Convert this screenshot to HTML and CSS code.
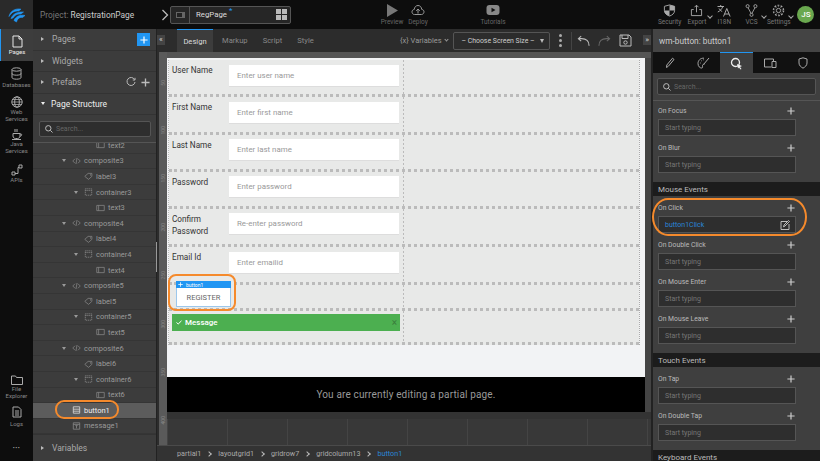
FILE: index.html
```html
<!DOCTYPE html>
<html>
<head>
  <meta charset="UTF-8">
  <title>RegistrationPage</title>
  <link rel="stylesheet" href="styles.css">
</head>
<body>
<svg class="sprite" width="0" height="0">
  <symbol id="i-plus" viewBox="0 0 10 10"><path d="M5 .5v9M.5 5h9" fill="none" stroke="currentColor" stroke-width="1.5"/></symbol>
  <symbol id="i-code" viewBox="0 0 12 10"><path d="M4 2 1 5l3 3M8 2l3 3-3 3M6.700 1 5.300 9" fill="none" stroke="currentColor"/></symbol>
  <symbol id="i-label" viewBox="0 0 12 10"><path d="M1 5.500 5.500 1.500H10.500V5.500L6 9.500Z" fill="none" stroke="currentColor"/><circle cx="8.600" cy="3.500" r=".7" fill="currentColor"/></symbol>
  <symbol id="i-box" viewBox="0 0 10 10"><path d="M1 1h8v8H1zM1 3.200h8" fill="none" stroke="currentColor" stroke-dasharray="1.600 .8"/></symbol>
  <symbol id="i-text" viewBox="0 0 12 10"><path d="M1 1.500h10v7H1zM3.500 1.500v7" fill="none" stroke="currentColor"/></symbol>
  <symbol id="i-btn" viewBox="0 0 10 10"><path d="M1 1h8v8H1zM1 4h8M1 6.500h8" fill="none" stroke="currentColor"/></symbol>
  <symbol id="i-msg" viewBox="0 0 10 10"><path d="M1 1h8v8H1zM1 3h8M5 4.500V8M3.500 4.500h3" fill="none" stroke="currentColor"/></symbol>
</svg>

<header class="topbar">
  <div class="logo">
    <svg width="18" height="16" viewBox="0 0 18 16"><path d="M1 9.500C2 4 7.500 1 13 2.200L10.600 4C6.500 3.400 3.500 5.500 1 9.500Z M3 11.500C5 6.500 10 4.500 15.500 5L12.800 7C9 6.500 6.500 8.300 5 11Z M6 13.500C7.500 9.500 12 7.500 17 8.500L14.500 10.500C11.500 10 9.500 11.500 8.500 15Z" fill="#2196f3" stroke="#2196f3" stroke-width=".6"/></svg>
  </div>
  <div class="project"><span class="project-key">Project:</span> RegistrationPage</div>
  <svg class="crumb-arrow" width="8" height="12" viewBox="0 0 8 12"><path d="M1.500 1 6.500 6l-5 5" fill="none" stroke="#bbb" stroke-width="1.300"/></svg>
  <div class="pagetab">
    <span class="pagetab-thumb"><i></i></span>
    <span class="pagetab-name">RegPage<sup>*</sup></span>
    <span class="pagetab-grid"><i></i><i></i><i></i><i></i></span>
  </div>
  <div class="actions-mid">
    <div class="action play">
      <svg width="12" height="13" viewBox="0 0 12 13"><path d="M1 0 12 6.500 1 13Z" fill="#777"/></svg>
      <span>Preview</span>
    </div>
    <div class="action deploy">
      <svg width="14" height="13" viewBox="0 0 14 13"><path d="M3.500 10.500C1.500 10.500 1 8.800 1 7.800 1 6.500 2 5.500 3.200 5.500 3.500 3 5 1.500 7 1.500S10.500 3 10.800 5.500C12 5.500 13 6.500 13 7.800 13 9 12 10.500 10.500 10.500ZM7 9.500V5M5.200 6.800 7 5l1.800 1.800" fill="none" stroke="#999"/></svg>
      <span>Deploy</span>
    </div>
    <div class="action tutorials">
      <svg width="14" height="13" viewBox="0 0 14 13"><rect x="0.500" y="1" width="13" height="10" rx="3" fill="#888"/><path d="M5.500 3.800 9.500 6l-4 2.200Z" fill="#111"/></svg>
      <span>Tutorials</span>
    </div>
  </div>
  <div class="actions-right">
    <div class="action sec">
      <svg width="13" height="13" viewBox="0 0 13 14"><path d="M6.500 1 12 2.500V7c0 3-2.500 5-5.500 6C3.500 12 1 10 1 7V2.500Z" fill="none" stroke="#aaa"/><path d="M6.500 1 12 2.500V7H6.500ZM6.500 7v6C3.500 12 1 10 1 7Z" fill="#aaa"/></svg>
      <span>Security</span>
    </div>
    <div class="action sec">
      <svg width="13" height="13" viewBox="0 0 14 14"><path d="M4 6H1.500v6.500h11V6H10M7 9V1.500M4.800 3.500 7 1.300l2.200 2.200" fill="none" stroke="#aaa"/></svg>
      <span>Export</span><b class="caret"></b>
    </div>
    <div class="action sec">
      <svg width="14" height="13" viewBox="0 0 14 13"><path d="M.500 2.500h6.500M3.700 1v1.500M5.800 2.500C5 5 3 7 .800 8M2 4.500c.8 1.500 2 2.500 3.200 3M6.500 12.500 9.800 4.500l3.300 8M7.600 10h4.400" fill="none" stroke="#aaa"/></svg>
      <span>I18N</span>
    </div>
    <div class="action sec">
      <svg width="13" height="13" viewBox="0 0 14 15"><circle cx="2.500" cy="2.500" r="1.800" fill="none" stroke="#aaa"/><circle cx="11.500" cy="2.500" r="1.800" fill="none" stroke="#aaa"/><circle cx="7" cy="12.500" r="1.800" fill="none" stroke="#aaa"/><path d="M3 4.300 6.500 10.800M11 4.300 7.500 10.800" fill="none" stroke="#aaa"/></svg>
      <span>VCS</span><b class="caret"></b>
    </div>
    <div class="action sec">
      <svg width="13" height="13" viewBox="0 0 14 14"><circle cx="7" cy="7" r="2.300" fill="none" stroke="#aaa"/><circle cx="7" cy="7" r="5" fill="none" stroke="#aaa" stroke-width="2.400" stroke-dasharray="1.800 1.340"/><circle cx="7" cy="7" r="4.600" fill="none" stroke="#0d0d0d" stroke-width=".8"/></svg>
      <span>Settings</span><b class="caret"></b>
    </div>
    <div class="avatar">JS</div>
  </div>
</header>

<div class="workspace">
  <nav class="rail">
    <div class="rail-item active">
      <svg width="11" height="13" viewBox="0 0 11 13"><path d="M1 1h6l3 3v8H1ZM7 1v3h3" fill="none" stroke="#e8e8e8"/></svg>
      <span>Pages</span>
    </div>
    <div class="rail-item db">
      <svg width="11" height="13" viewBox="0 0 11 13"><ellipse cx="5.500" cy="2.500" rx="4.500" ry="1.700" fill="none" stroke="#aaa"/><path d="M1 2.500v8c0 1 2 1.700 4.500 1.700s4.500-.7 4.500-1.700v-8M1 6.500c0 1 2 1.700 4.500 1.700S10 7.500 10 6.500" fill="none" stroke="#aaa"/></svg>
      <span>Databases</span>
    </div>
    <div class="rail-item">
      <svg width="12" height="12" viewBox="0 0 12 12"><circle cx="6" cy="6" r="5.200" fill="none" stroke="#aaa"/><ellipse cx="6" cy="6" rx="2.300" ry="5.200" fill="none" stroke="#aaa"/><path d="M.8 6h10.400M1.500 3.500h9M1.500 8.500h9" stroke="#aaa" stroke-width=".8"/></svg>
      <span>Web<br>Services</span>
    </div>
    <div class="rail-item">
      <svg width="12" height="12" viewBox="0 0 12 12"><path d="M2 5.500h7v2.500c0 1.500-1.200 2.500-2.500 2.500h-2C3.200 10.500 2 9.500 2 8ZM9 6h1c1 0 1 2-.8 2.200M1 11.500h9M4 1v3M6 1v3" fill="none" stroke="#aaa"/></svg>
      <span>Java<br>Services</span>
    </div>
    <div class="rail-item api">
      <svg width="12" height="12" viewBox="0 0 12 12"><path d="M1 8h3v3H1ZM8 1h3v3H8ZM4 9.500h3V3.500h1" fill="none" stroke="#aaa"/></svg>
      <span>APIs</span>
    </div>
    <div class="rail-item files">
      <svg width="12" height="10" viewBox="0 0 12 10"><path d="M.5 9.500V1h4l1 1.500h6v7Z" fill="none" stroke="#aaa"/></svg>
      <span>File<br>Explorer</span>
    </div>
    <div class="rail-item logs">
      <svg width="10" height="12" viewBox="0 0 10 12"><path d="M1 1h5.500L9 3.500V11H1ZM3 5h4M3 7h4M3 9h4" fill="none" stroke="#aaa"/></svg>
      <span>Logs</span>
    </div>
    <div class="rail-dots">•••</div>
  </nav>

  <aside class="leftpanel">
    <div class="sec-row"><b class="tri"></b><span>Pages</span><span class="add-btn"><svg width="8" height="8"><use href="#i-plus"/></svg></span></div>
    <div class="sec-row"><b class="tri"></b><span>Widgets</span></div>
    <div class="sec-row"><b class="tri"></b><span>Prefabs</span>
      <span class="sec-tools">
        <svg width="10" height="10" viewBox="0 0 10 10"><path d="M8.500 2.500A4 4 0 1 0 9 5M9 .8v2.200H6.800" fill="none" stroke="#bbb"/></svg>
        <svg width="9" height="9"><use href="#i-plus"/></svg>
      </span>
    </div>
    <div class="sec-row open"><b class="tri down"></b><span>Page Structure</span></div>
    <div class="search-wrap">
      <div class="searchbox">
        <svg width="8" height="8" viewBox="0 0 8 8"><circle cx="3.300" cy="3.300" r="2.700" fill="none" stroke="#bbb"/><path d="m5.300 5.300 2.200 2.200" stroke="#bbb"/></svg>
        <span>Search...</span>
      </div>
    </div>
    <div class="tree">
      <div class="tree-list">
        <div class="node lv3"><svg><use href="#i-text"/></svg>text2</div>
        <div class="node lv1"><b class="tri-s"></b><svg><use href="#i-code"/></svg>composite3</div>
        <div class="node lv2"><svg><use href="#i-label"/></svg>label3</div>
        <div class="node lv2b"><b class="tri-s"></b><svg><use href="#i-box"/></svg>container3</div>
        <div class="node lv3"><svg><use href="#i-text"/></svg>text3</div>
        <div class="node lv1"><b class="tri-s"></b><svg><use href="#i-code"/></svg>composite4</div>
        <div class="node lv2"><svg><use href="#i-label"/></svg>label4</div>
        <div class="node lv2b"><b class="tri-s"></b><svg><use href="#i-box"/></svg>container4</div>
        <div class="node lv3"><svg><use href="#i-text"/></svg>text4</div>
        <div class="node lv1"><b class="tri-s"></b><svg><use href="#i-code"/></svg>composite5</div>
        <div class="node lv2"><svg><use href="#i-label"/></svg>label5</div>
        <div class="node lv2b"><b class="tri-s"></b><svg><use href="#i-box"/></svg>container5</div>
        <div class="node lv3"><svg><use href="#i-text"/></svg>text5</div>
        <div class="node lv1"><b class="tri-s"></b><svg><use href="#i-code"/></svg>composite6</div>
        <div class="node lv2"><svg><use href="#i-label"/></svg>label6</div>
        <div class="node lv2b"><b class="tri-s"></b><svg><use href="#i-box"/></svg>container6</div>
        <div class="node lv3"><svg><use href="#i-text"/></svg>text6</div>
        <div class="node lv0 selected"><svg><use href="#i-btn"/></svg>button1</div>
        <div class="node lv0"><svg><use href="#i-msg"/></svg>message1</div>
      </div>
    </div>
    <div class="tree-scroll"></div>
    <div class="sec-row vars"><b class="tri"></b><span>Variables</span></div>
  </aside>

  <main class="center">
    <div class="toolbar">
      <span class="handle">«</span>
      <div class="tabs">
        <span class="tab active">Design</span>
        <span class="tab">Markup</span>
        <span class="tab">Script</span>
        <span class="tab">Style</span>
      </div>
      <div class="tools">
        <span class="vars-btn">{x} Variables <b class="caret"></b></span>
        <span class="screen-select">– Choose Screen Size –<b class="tri-sel"></b></span>
        <span class="kebab"><i></i><i></i><i></i></span>
        <b class="tool-sep"></b>
        <svg class="undo" width="13" height="12" viewBox="0 0 14 12"><path d="M13 11C13 6 10 3.500 5 3.500H1.500M4.500 .8 1.500 3.500l3 2.700" fill="none" stroke="#bbb" stroke-width="1.200"/></svg>
        <svg class="redo" width="13" height="12" viewBox="0 0 14 12"><path d="M1 11C1 6 4 3.500 9 3.500H12.500M9.500 .8l3 2.700-3 2.700" fill="none" stroke="#666" stroke-width="1.200"/></svg>
        <svg class="save" width="13" height="13" viewBox="0 0 13 13"><path d="M1 1h9l2 2v9H1ZM3 1v3.500h6V1" fill="none" stroke="#bbb"/><circle cx="6.500" cy="8.500" r="1.700" fill="none" stroke="#bbb"/></svg>
      </div>
      <span class="handle right">»</span>
    </div>
    <div class="canvas-area">
      <div class="ruler-left">
        <span>50</span><span>100</span><span>150</span><span>200</span><span>250</span><span>300</span><span>350</span><span>400</span>
      </div>
      <div class="canvas">
        <div class="ruler-top"></div>
        <div class="page">
          <div class="form">
            <div class="form-row r37"><label>User Name</label><div class="input up">Enter user name</div></div>
            <div class="form-row r38"><label>First Name</label><div class="input up">Enter first name</div></div>
            <div class="form-row r37"><label>Last Name</label><div class="input">Enter last name</div></div>
            <div class="form-row r37"><label>Password</label><div class="input">Enter password</div></div>
            <div class="form-row r38"><label>Confirm Password</label><div class="input">Re-enter password</div></div>
            <div class="form-row r38"><label>Email Id</label><div class="input up">Enter emailid</div></div>
            <div class="form-row r26 btn-row">
              <div class="btn-widget">
                <div class="btn-tag"><svg width="5" height="5"><use href="#i-plus"/></svg>button1</div>
                <div class="btn-body">REGISTER</div>
              </div>
            </div>
            <div class="form-row r34 msg-row">
              <div class="message">
                <svg width="6" height="5" viewBox="0 0 6 5"><path d="M.5 2.500 2.200 4 5.500 .8" fill="none" stroke="#fff"/></svg>
                <span>Message</span><span class="msg-x">×</span>
              </div>
            </div>
          </div>
        </div>
        <div class="partial-note">You are currently editing a partial page.</div>
        <div class="grid-bg"></div>
      </div>
    </div>
    <div class="breadcrumbs">
      <span>partial1</span><i></i><span>layoutgrid1</span><i></i><span>gridrow7</span><i></i><span>gridcolumn13</span><i></i><span class="cur">button1</span>
    </div>
  </main>

  <aside class="props">
    <div class="props-title">wm-button: button1</div>
    <div class="props-tabs">
      <span class="ptab"><svg width="10" height="12" viewBox="0 0 10 12"><path d="M1.500 10.500 1.800 8 7.500 1.200 9 2.500 3.300 9.300Z" fill="none" stroke="#aaa"/></svg></span>
      <span class="ptab"><svg width="13" height="12" viewBox="0 0 13 12"><path d="M7 1.200C3.500.8 1 3.500 1 6.500c0 3 2 4.500 3.500 4.500 1.500 0 1-1.500 1-2.500 0-1 1-1.300 2-1.300M12 1 6.500 7.500M3 6h.7M4 3.800h.7M6 2.800h.7" fill="none" stroke="#aaa"/></svg></span>
      <span class="ptab active"><svg width="13" height="13" viewBox="0 0 13 13"><circle cx="5.500" cy="5.500" r="4" fill="none" stroke="#eee" stroke-width="1.300"/><path d="m7 7 5 2-2 1 1.500 2-1 .5-1.500-2-1 1Z" fill="#eee"/></svg></span>
      <span class="ptab"><svg width="14" height="10" viewBox="0 0 14 10"><path d="M8.500 9H1.500V1h9v2M9 3.500h4v6H9Z" fill="none" stroke="#aaa"/></svg></span>
      <span class="ptab"><svg width="10" height="12" viewBox="0 0 10 12"><path d="M5 .8 9 2v4c0 2.500-2 4-4 5.200C3 10 1 8.500 1 6V2Z" fill="none" stroke="#aaa"/></svg></span>
    </div>
    <div class="props-search">
      <div class="searchbox">
        <svg width="8" height="8" viewBox="0 0 8 8"><circle cx="3.300" cy="3.300" r="2.700" fill="none" stroke="#bbb"/><path d="m5.300 5.300 2.200 2.200" stroke="#bbb"/></svg>
        <span>Search...</span>
      </div>
    </div>
    <div class="event-group first">
      <div class="field"><div class="field-head">On Focus<svg width="8" height="8"><use href="#i-plus"/></svg></div><div class="field-input">Start typing</div></div>
      <div class="field"><div class="field-head">On Blur<svg width="8" height="8"><use href="#i-plus"/></svg></div><div class="field-input">Start typing</div></div>
    </div>
    <div class="event-title">Mouse Events</div>
    <div class="event-group">
      <div class="field"><div class="field-head">On Click<svg width="8" height="8"><use href="#i-plus"/></svg></div>
        <div class="field-input filled">button1Click
          <svg width="10" height="10" viewBox="0 0 10 10"><path d="M7 1.500H1v8h8V4M3.500 6.800 4 5 8.500 .5l1 1L5 6Z" fill="none" stroke="#ccc" stroke-width=".9"/></svg>
        </div>
      </div>
      <div class="field"><div class="field-head">On Double Click<svg width="8" height="8"><use href="#i-plus"/></svg></div><div class="field-input">Start typing</div></div>
      <div class="field"><div class="field-head">On Mouse Enter<svg width="8" height="8"><use href="#i-plus"/></svg></div><div class="field-input">Start typing</div></div>
      <div class="field"><div class="field-head">On Mouse Leave<svg width="8" height="8"><use href="#i-plus"/></svg></div><div class="field-input">Start typing</div></div>
    </div>
    <div class="event-title">Touch Events</div>
    <div class="event-group">
      <div class="field"><div class="field-head">On Tap<svg width="8" height="8"><use href="#i-plus"/></svg></div><div class="field-input">Start typing</div></div>
      <div class="field"><div class="field-head">On Double Tap<svg width="8" height="8"><use href="#i-plus"/></svg></div><div class="field-input">Start typing</div></div>
    </div>
    <div class="event-title">Keyboard Events</div>
  </aside>
</div>

<!-- orange callouts drawn over the screenshot -->
<div class="callout c-tree"></div>
<div class="callout c-button"></div>
<div class="callout c-click"></div>
</body>
</html>
```
FILE: styles.css
```css
*{box-sizing:border-box;}
html,body{margin:0;height:100%;}
body{width:820px;height:461px;overflow:hidden;background:#0d0d0d;color:#ccc;font-family:Roboto,"Liberation Sans",sans-serif;font-size:9px;position:relative;}
.sprite{position:absolute;}

/* top bar */
.topbar{display:flex;align-items:center;height:29px;background:#0d0d0d;}
.logo{width:33px;height:29px;background:#2a2a2a;display:flex;align-items:center;justify-content:center;}
.project{width:122px;padding-left:7px;font-size:8.400px;color:#ccc;white-space:nowrap;}
.project-key{color:#777;}
.crumb-arrow{margin:0 1px 0 6px;}
.pagetab{display:flex;align-items:center;width:121px;height:18px;border:1px solid #555;border-radius:2px;background:#262626;}
.pagetab-thumb{width:19px;height:16px;border-right:1px solid #555;display:flex;align-items:center;justify-content:center;}
.pagetab-thumb i{display:block;width:9px;height:6px;border:1px solid #666;border-right-width:3px;background:#222;}
.pagetab-name{flex:1;padding-left:6px;color:#ddd;font-size:7.800px;}
.pagetab-name sup{color:#2196f3;font-size:8px;line-height:0;margin-left:2px;}
.pagetab-grid{display:grid;grid-template-columns:5px 5px;gap:1px;margin-right:3px;}
.pagetab-grid i{display:block;height:5px;background:#bbb;}
.actions-mid{width:365px;height:29px;display:flex;flex:none;}
.action{display:flex;flex-direction:column;align-items:center;padding-top:4px;color:#666;font-size:6.500px;height:29px;position:relative;}
.action span{margin-top:1px;line-height:9px;white-space:nowrap;}
.action.play{margin-left:89px;width:24px;}
.action.deploy{margin-left:2px;width:24px;}
.action.tutorials{margin-left:48px;width:30px;}
.actions-right{display:flex;align-items:flex-start;height:29px;}
.action.sec{width:27.300px;color:#777;}
.caret{display:inline-block;width:4px;height:4px;border-right:1px solid #aaa;border-bottom:1px solid #aaa;transform:rotate(45deg);}
.action .caret{position:absolute;right:-1px;top:14px;}
.avatar{width:17px;height:17px;margin:6px 0 0 5px;border-radius:50%;background:#6aa84f;color:#fff;font-size:8px;font-weight:500;display:flex;align-items:center;justify-content:center;}

/* main columns */
.workspace{display:flex;height:432px;}
.rail{width:33px;flex:none;display:flex;flex-direction:column;background:#0d0d0d;}
.rail-item{display:flex;flex-direction:column;align-items:center;flex:none;padding:6px 0 0;color:#888;font-size:6px;line-height:7px;text-align:center;}
.rail-item.active{height:32px;background:#3d3d3d;border-left:1px solid #2196f3;color:#eee;}
.rail-item.db{padding-bottom:2px;}
.rail-item.db span{margin-top:1px;}
.rail-item.api{padding-top:10px;}
.rail-item.files{margin-top:auto;padding-bottom:1px;}
.rail-item.logs{padding-bottom:8px;}
.rail-item.logs span{margin-top:2px;}
.rail-dots{height:26px;text-align:center;color:#aaa;font-size:6px;letter-spacing:.5px;line-height:26px;}

/* left panel */
.leftpanel{width:124px;flex:none;display:flex;flex-direction:column;background:#3c3c3c;border-right:1px solid #222;position:relative;}
.sec-row{display:flex;align-items:center;height:21.500px;flex:none;padding-left:8px;font-size:8.500px;color:#aaa;border-bottom:1px solid #333;position:relative;}
.sec-row.open{color:#eee;}
.tri{width:0;height:0;margin-right:8px;border-left:3px solid #bbb;border-top:2.500px solid transparent;border-bottom:2.500px solid transparent;}
.tri.down{border-top:3px solid #eee;border-bottom:0;border-left:2.500px solid transparent;border-right:2.500px solid transparent;margin-right:6px;}
.add-btn{position:absolute;right:6px;top:4px;width:13px;height:13px;background:#2196f3;color:#fff;display:flex;align-items:center;justify-content:center;}
.sec-tools{margin-left:auto;margin-right:6px;display:flex;gap:5px;align-items:center;color:#bbb;}
.search-wrap{height:28px;flex:none;padding:6px 5px 5px 6px;border-bottom:1px solid #555;}
.searchbox{display:flex;align-items:center;height:100%;padding-left:5px;gap:3px;background:#2e2e2e;border:1px solid #555;border-radius:2px;color:#666;font-size:7px;}
.tree{flex:1;overflow:hidden;min-height:0;}
.tree-list{margin-top:-5px;}
.node{display:flex;align-items:center;height:15.600px;color:#999;font-size:7.500px;border-bottom:1px solid #353535;white-space:nowrap;}
.node svg{width:9px;height:8px;margin-right:3px;color:#888;flex:none;}
.lv0{padding-left:39px;}
.lv1{padding-left:29px;}
.lv2{padding-left:51px;}
.lv2b{padding-left:41px;}
.lv3{padding-left:63px;}
.tri-s{width:0;height:0;margin-right:6px;border-top:3px solid #999;border-left:2.500px solid transparent;border-right:2.500px solid transparent;}
.node.selected{background:#5c5c5c;color:#eee;}
.node.selected svg{color:#ddd;}
.tree-scroll{position:absolute;right:-1px;top:213px;width:1.500px;height:30px;background:#999;}
.sec-row.vars{height:27px;border-bottom:0;border-top:1px solid #333;}

/* center */
.center{width:494px;flex:none;display:flex;flex-direction:column;background:#2c2c2c;}
.toolbar{display:flex;align-items:stretch;height:23px;flex:none;background:#2c2c2c;position:relative;}
.handle{position:absolute;left:0;top:6px;width:8px;height:10px;background:#444;color:#ccc;font-size:8px;line-height:9px;text-align:center;}
.handle.right{left:auto;right:0;}
.tabs{display:flex;margin-left:20px;height:23px;}
.tab{padding:0 7.500px;display:flex;align-items:center;font-size:7.600px;color:#888;}
.tab.active{background:#3c3c3c;border-top:1px solid #2196f3;color:#ddd;width:36px;padding:0;justify-content:center;margin-right:1.500px;}
.tools{display:flex;align-items:center;margin-left:auto;}
.vars-btn{font-size:7.500px;color:#999;margin-right:5px;white-space:nowrap;}
.vars-btn .caret{width:3px;height:3px;margin:0 0 2px 1px;border-color:#999;}
.screen-select{display:flex;align-items:center;justify-content:space-between;width:97px;height:18px;padding:0 5px 0 8px;font-size:6.900px;color:#ccc;border:1px solid #555;border-radius:2px;white-space:nowrap;}
.tri-sel{width:0;height:0;border-top:4px solid #bbb;border-left:2px solid transparent;border-right:2px solid transparent;}
.kebab{display:flex;flex-direction:column;gap:1.500px;margin:0 9px 0 9px;}
.kebab i{display:block;width:3.500px;height:3.500px;border-radius:50%;background:#aaa;}
.tool-sep{width:1px;height:18px;background:#444;}
.undo{margin-left:5px;}
.redo{margin-left:8px;}
.save{margin:0 19px 0 8px;}
.canvas-area{flex:1;display:flex;min-height:0;padding-left:2px;}
.ruler-left{width:8px;flex:none;background:#5a5a5a;display:flex;flex-direction:column;justify-content:space-around;align-items:center;color:#888;font-size:5px;overflow:hidden;padding-top:8px;}
.ruler-left span{writing-mode:vertical-rl;transform:rotate(180deg);}
.canvas{flex:1;display:flex;flex-direction:column;background:#444;}
.ruler-top{height:6px;flex:none;background:#555;}
.page{height:319px;width:478px;flex:none;background:#f2f3f5;padding:2px 5px 0 1px;}
.form{border-left:1px dotted #bbb;border-right:1px dotted #aaa;}
.form-row{display:flex;align-items:flex-start;background:repeating-linear-gradient(to bottom,#bbb 0 2px,transparent 2px 4px) 234px 0/1px 100% no-repeat,#e8e9e8;border-bottom:3px dotted #bbb;padding-left:3px;padding-top:3px;}
.r37{height:37px;}
.r38{height:38px;}
.r26{height:26px;}
.r34{height:34px;}
.form-row label{width:57px;font-size:8.200px;color:#333;line-height:12px;padding-top:1px;}
.input{width:170px;height:22px;margin-top:1px;background:#fff;border-bottom:1px solid #ddd;padding-left:8px;color:#999;font-size:7.900px;line-height:22px;}
.input.up{margin-top:2px;}
.btn-row{padding-top:0;position:relative;}
.btn-widget{position:absolute;left:7px;top:-4px;width:55px;}
.btn-tag{display:flex;align-items:center;gap:3px;height:7px;padding-left:2px;background:#2196f3;color:#fff;font-size:5px;}
.btn-body{height:19px;background:#fff;border:1px solid #9cc7ec;border-top:0;color:#666;font-size:7.500px;text-align:center;line-height:19px;}
.msg-row{padding-top:3px;}
.message{display:flex;align-items:center;width:228px;height:17px;padding:0 3px 0 4px;gap:3px;background:#4caf50;color:#fff;font-size:8px;font-weight:500;}
.msg-x{margin-left:auto;color:#3a7d3d;font-size:10px;font-weight:400;}
.partial-note{height:35px;width:478px;flex:none;display:flex;align-items:center;justify-content:center;background:#000;color:#999;font-size:10px;letter-spacing:.15px;}
.grid-bg{flex:1;background-color:#383838;background-image:linear-gradient(to right,#444 1px,transparent 1px);background-size:60px 100%;border-top:7px solid #333;}
.breadcrumbs{display:flex;align-items:center;height:16px;flex:none;padding-left:20px;background:#333;border-top:1px solid #4a4a4a;color:#aaa;font-size:7.200px;}
.breadcrumbs i{display:inline-block;width:4px;height:4px;margin:0 7px 0 6px;border-top:1px solid #bbb;border-right:1px solid #bbb;transform:rotate(45deg);}
.breadcrumbs .cur{color:#2a86d8;}

/* properties panel */
.props{width:169px;flex:none;background:#3f3f3f;border-left:2px solid #222;overflow:hidden;}
.props-title{height:23px;display:flex;align-items:center;padding-left:6px;background:#444;color:#ccc;font-size:8.300px;}
.props-tabs{display:flex;height:21px;background:#111;}
.ptab{flex:1;display:flex;align-items:center;justify-content:center;}
.ptab.active{background:#3f3f3f;border-top:1px solid #2196f3;}
.props-search{height:28px;padding:5px 4px 5px 4px;border-bottom:1px solid #555;}
.event-group{padding:4px 0 5px 5px;}
.event-group.first{padding-top:2px;}
.field{height:37px;padding-top:2px;}
.field-head{display:flex;align-items:center;justify-content:space-between;width:138px;height:12px;color:#bbb;font-size:6.800px;}
.field-head svg{color:#ccc;margin-right:1px;}
.field-input{display:flex;align-items:center;justify-content:space-between;width:138px;height:17px;margin-top:2px;padding:0 5px 0 6px;background:#2e2e2e;border:1px solid #555;color:#777;font-size:7px;}
.field-input.filled{color:#2a86d8;}
.event-title{display:flex;align-items:center;height:14px;padding-left:5px;background:#1c1c1c;color:#bbb;font-size:8px;}

/* callouts */
.callout{position:absolute;border:2px solid #f58a2c;pointer-events:none;}
.c-tree{left:55px;top:400px;width:64px;height:19px;border-radius:9px;}
.c-button{left:168px;top:274px;width:68px;height:37px;border-radius:8px;}
.c-click{left:652px;top:198px;width:155px;height:38px;border-radius:16px / 19px;}
```
